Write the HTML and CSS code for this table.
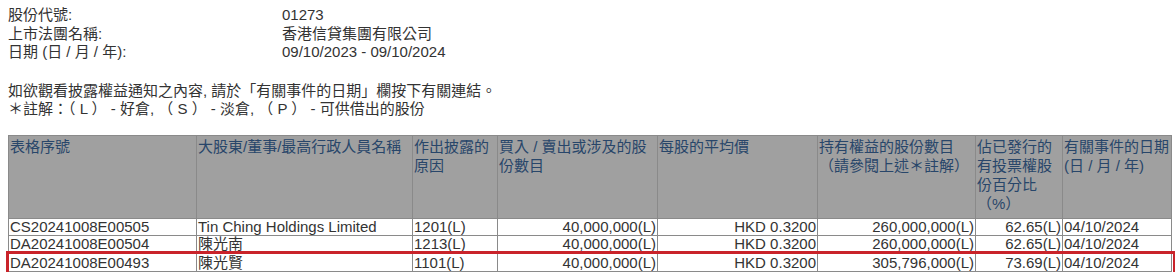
FILE: index.html
```html
<!DOCTYPE html>
<html>
<head>
<meta charset="utf-8">
<link rel="stylesheet" href="styles.css">
</head>
<body>
<div class="info">
  <div class="info-row"><span class="label">股份代號:</span><span class="value">01273</span></div>
  <div class="info-row"><span class="label">上市法團名稱:</span><span class="value">香港信貸集團有限公司</span></div>
  <div class="info-row"><span class="label">日期 (日 / 月 / 年):</span><span class="value">09/10/2023 - 09/10/2024</span></div>
</div>
<div class="notes">
  <div>如欲觀看披露權益通知之內容, 請於「有關事件的日期」欄按下有關連結。</div>
  <div>＊註解：（ L ） - 好倉, （ S ） - 淡倉, （ P ） - 可供借出的股份</div>
</div>
<div class="table-wrap">
<table class="grid">
  <colgroup>
    <col class="c1"><col class="c2"><col class="c3"><col class="c4"><col class="c5"><col class="c6"><col class="c7"><col class="c8">
  </colgroup>
  <thead>
    <tr>
      <th>表格序號</th>
      <th>大股東/董事/最高行政人員名稱</th>
      <th>作出披露的原因</th>
      <th>買入 / 賣出或涉及的股份數目</th>
      <th>每股的平均價</th>
      <th>持有權益的股份數目<br>（請參閱上述＊註解）</th>
      <th>佔已發行的有投票權股份百分比<br>（%）</th>
      <th>有關事件的日期<br>(日 / 月 / 年)</th>
    </tr>
  </thead>
  <tbody>
    <tr>
      <td>CS20241008E00505</td>
      <td>Tin Ching Holdings Limited</td>
      <td>1201(L)</td>
      <td class="num">40,000,000(L)</td>
      <td class="num">HKD 0.3200</td>
      <td class="num">260,000,000(L)</td>
      <td class="num">62.65(L)</td>
      <td>04/10/2024</td>
    </tr>
    <tr>
      <td>DA20241008E00504</td>
      <td>陳光南</td>
      <td>1213(L)</td>
      <td class="num">40,000,000(L)</td>
      <td class="num">HKD 0.3200</td>
      <td class="num">260,000,000(L)</td>
      <td class="num">62.65(L)</td>
      <td>04/10/2024</td>
    </tr>
    <tr class="hl-row">
      <td>DA20241008E00493</td>
      <td>陳光賢</td>
      <td>1101(L)</td>
      <td class="num">40,000,000(L)</td>
      <td class="num">HKD 0.3200</td>
      <td class="num">305,796,000(L)</td>
      <td class="num">73.69(L)</td>
      <td>04/10/2024</td>
    </tr>
  </tbody>
</table>
<div class="highlight"></div>
</div>
</body>
</html>
```

FILE: styles.css
```css
html, body {
  margin: 0;
  padding: 0;
  background: #ffffff;
}
body {
  padding: 6px 8px 0 8px;
  font-family: "Liberation Sans", "Noto Sans CJK TC", sans-serif;
  font-size: 15px;
  color: #333333;
}
.info-row {
  display: flex;
  line-height: 18.5px;
}
.label {
  width: 274px;
}
.notes {
  margin-top: 20px;
  line-height: 18.5px;
}
.table-wrap {
  position: relative;
  margin-top: 16px;
  width: 1163px;
}
.grid {
  border-collapse: collapse;
  table-layout: fixed;
  width: 1163px;
}
.c1 { width: 188px; }
.c2 { width: 216px; }
.c3 { width: 85px; }
.c4 { width: 160px; }
.c5 { width: 160px; }
.c6 { width: 158px; }
.c7 { width: 87px; }
.c8 { width: 109px; }
.grid th {
  background: #a0a0a0;
  color: #28466a;
  font-weight: normal;
  text-align: left;
  vertical-align: top;
  padding: 1px 1px 2px 1px;
  height: 79px;
  line-height: 19px;
  border: 1px solid #8a8a8a;
}
.grid td {
  padding: 0 1px;
  line-height: 16px;
  height: 16px;
  border: 1px solid #8a8a8a;
  white-space: nowrap;
  overflow: hidden;
}
.grid .num {
  text-align: right;
}
.grid .hl-row td {
  padding-top: 2px;
}
.highlight {
  position: absolute;
  left: -2px;
  right: -5px;
  bottom: -3px;
  height: 18px;
  border: 3px solid #c9232a;
  pointer-events: none;
}
```
